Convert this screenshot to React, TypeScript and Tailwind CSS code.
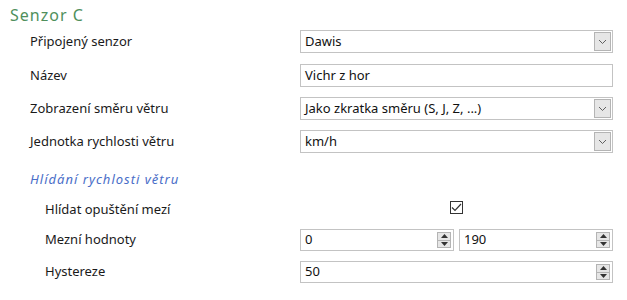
import React from "react";

const font = { fontFamily: '"Noto Sans", "Open Sans", sans-serif' };

function Chevron() {
  return (
    <svg width="9" height="6" viewBox="0 0 9 6" className="block">
      <path d="M1 1 L4.5 4.5 L8 1" fill="none" stroke="#606060" strokeWidth="1" />
    </svg>
  );
}

function Select({ value }: { value: string }) {
  return (
    <div className="flex h-[23px] w-[313px] items-stretch border border-[#c3c3c3] bg-white">
      <div className="flex flex-1 items-center pl-[4px] text-[13px] text-[#111]">{value}</div>
      <div className="my-[1px] mr-[1px] flex w-[17px] items-center justify-center border border-[#b4b4b4] bg-[#e6e6e6]">
        <Chevron />
      </div>
    </div>
  );
}

function TextInput({ value }: { value: string }) {
  return (
    <div className="flex h-[23px] w-[313px] items-center border border-[#c3c3c3] bg-white pl-[4px] text-[13px] text-[#111]">
      {value}
    </div>
  );
}

function Spinner() {
  return (
    <div className="my-[2px] mr-[2px] flex w-[14px] flex-col border border-[#b4b4b4] bg-[#e6e6e6]">
      <div className="flex flex-1 items-center justify-center border-b border-[#b4b4b4]">
        <svg width="7" height="4" viewBox="0 0 7 4" className="block">
          <path d="M0 4 L3.5 0 L7 4 Z" fill="#333" />
        </svg>
      </div>
      <div className="flex flex-1 items-center justify-center">
        <svg width="7" height="4" viewBox="0 0 7 4" className="block">
          <path d="M0 0 L3.5 4 L7 0 Z" fill="#333" />
        </svg>
      </div>
    </div>
  );
}

function NumInput({ value, w }: { value: string; w: string }) {
  return (
    <div className={`flex h-[22px] items-stretch border border-[#c3c3c3] bg-white ${w}`}>
      <div className="flex flex-1 items-center pl-[4px] text-[13px] text-[#111]">{value}</div>
      <Spinner />
    </div>
  );
}

function Row({ label, children, cls }: { label: string; children: React.ReactNode; cls: string }) {
  return (
    <div className={`flex items-center ${cls}`}>
      <div className="w-[300px] shrink-0 pl-[30px] text-[13px] text-[#1a1a1a]">{label}</div>
      {children}
    </div>
  );
}

export default function App() {
  return (
    <div className="relative h-[300px] w-[627px] overflow-hidden bg-white" style={font}>
      <div className="flex h-[30px] items-center pl-[10px] text-[16px] tracking-[1px] text-[#4f8f5c]">
        Senzor C
      </div>
      <Row label="Připojený senzor" cls="h-[23px]">
        <Select value="Dawis" />
      </Row>
      <Row label="Název" cls="h-[23px] mt-[11px]">
        <TextInput value="Vichr z hor" />
      </Row>
      <Row label="Zobrazení směru větru" cls="h-[23px] mt-[10px]">
        <Select value="Jako zkratka směru (S, J, Z, ...)" />
      </Row>
      <Row label="Jednotka rychlosti větru" cls="h-[23px] mt-[10px]">
        <Select value="km/h" />
      </Row>
      <div className="mt-[15px] flex h-[24px] items-center pl-[30px] text-[13px] italic tracking-[1px] text-[#4a6ec8]">
        Hlídání rychlosti větru
      </div>
      <div className="mt-[8px] flex h-[20px] items-center">
        <div className="w-[300px] shrink-0 pl-[45px] text-[13px] text-[#1a1a1a]">Hlídat opuštění mezí</div>
        <div className="flex w-[313px] justify-center pb-[6px]">
          <div className="flex h-[13px] w-[13px] items-center justify-center border border-[#333] bg-white">
            <svg width="11" height="9" viewBox="0 0 11 9" className="block">
              <path d="M1 4.5 L4 7.5 L10 1" fill="none" stroke="#333" strokeWidth="1.2" />
            </svg>
          </div>
        </div>
      </div>
      <div className="mt-[9px] flex h-[22px] items-center">
        <div className="w-[300px] shrink-0 pl-[45px] text-[13px] text-[#1a1a1a]">Mezní hodnoty</div>
        <div className="flex w-[313px] gap-[5px]">
          <NumInput value="0" w="w-[154px]" />
          <NumInput value="190" w="w-[154px]" />
        </div>
      </div>
      <div className="mt-[10px] flex h-[22px] items-center">
        <div className="w-[300px] shrink-0 pl-[45px] text-[13px] text-[#1a1a1a]">Hystereze</div>
        <NumInput value="50" w="w-[313px]" />
      </div>
    </div>
  );
}
